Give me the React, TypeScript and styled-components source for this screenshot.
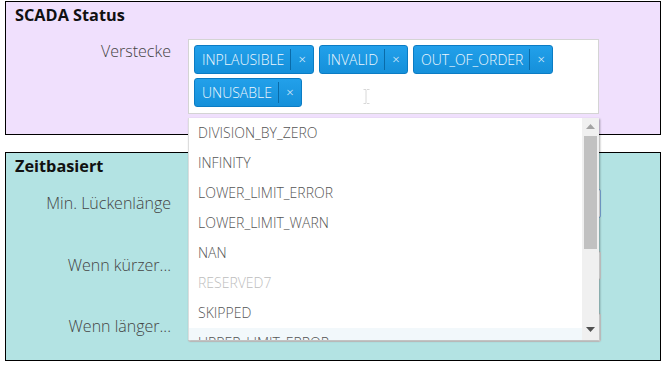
import React from 'react';
import styled, { createGlobalStyle } from 'styled-components';

const GlobalStyle = createGlobalStyle`
  html, body {
    margin: 0;
    padding: 0;
    background: #fff;
    font-family: 'Open Sans', 'Liberation Sans', sans-serif;
  }
`;

const Page = styled.div`
  padding: 1px 10px 0 5px;
  display: flex;
  flex-direction: column;
  gap: 17px;
  width: 656px;
`;

const Panel = styled.section<{ $bg: string; $height: number }>`
  position: relative;
  box-sizing: border-box;
  height: ${(p) => p.$height}px;
  background: ${(p) => p.$bg};
  border: 1px solid #000;
  padding: 2px 0 0 0;
`;

const Title = styled.h3`
  margin: 0 0 0 9px;
  font-size: 16.3px;
  font-weight: 700;
  line-height: 22px;
  color: #111;
`;

const FormGrid = styled.div<{ $top: number; $gap: number }>`
  display: grid;
  grid-template-columns: 165px 411px;
  column-gap: 17px;
  row-gap: ${(p) => p.$gap}px;
  margin-top: ${(p) => p.$top}px;
`;

const Label = styled.label<{ $pad: number }>`
  text-align: right;
  font-size: 16px;
  font-weight: 300;
  color: #444;
  padding-top: ${(p) => p.$pad}px;
  line-height: 20px;
`;

const Control = styled.div`
  position: relative;
`;

const TagBox = styled.div`
  box-sizing: border-box;
  width: 411px;
  height: 75px;
  background: #fff;
  border: 1px solid #d4d4d4;
  padding: 5px 0 0 5px;
  display: flex;
  flex-wrap: wrap;
  align-content: flex-start;
  gap: 4px 5px;
  position: relative;
`;

const Tag = styled.span`
  display: inline-flex;
  align-items: stretch;
  height: 29px;
  box-sizing: border-box;
  background: linear-gradient(#22a0ea, #1590da);
  border: 1px solid #0b7cc4;
  border-radius: 3px;
  color: #eef7fd;
  font-size: 14px;
  font-weight: 300;
  line-height: 27px;
`;

const TagText = styled.span`
  padding: 0 6px 0 7px;
`;

const TagClose = styled.span`
  width: 22px;
  border-left: 1px solid #0a6ba8;
  margin: 3px 0;
  line-height: 21px;
  text-align: center;
  font-size: 13px;
`;

const Cursor = styled.svg`
  position: absolute;
  left: 174px;
  top: 49px;
`;

const Dropdown = styled.div`
  position: absolute;
  z-index: 5;
  top: 79px;
  left: 0;
  width: 411px;
  height: 222px;
  box-sizing: border-box;
  background: #fff;
  border-left: 1px solid #ddd;
  box-shadow: 1px 1px 2px rgba(0, 0, 0, 0.35);
  display: flex;
  overflow: hidden;
`;

const OptionList = styled.ul`
  list-style: none;
  margin: 0;
  padding: 0;
  flex: 1;
  overflow: hidden;
`;

const Option = styled.li<{ $disabled?: boolean; $active?: boolean }>`
  height: 30px;
  line-height: 30px;
  padding-left: 9px;
  font-size: 14px;
  font-weight: 300;
  color: ${(p) => (p.$disabled ? '#bdbdbd' : '#555')};
  background: ${(p) => (p.$active ? '#f2f8fb' : 'transparent')};
`;

const ScrollTrack = styled.div`
  width: 17px;
  background: #f0f0f0;
  display: flex;
  flex-direction: column;
  align-items: center;
`;

const Arrow = styled.div<{ $down?: boolean }>`
  height: 17px;
  display: flex;
  align-items: center;
  justify-content: center;
  ${(p) => (p.$down ? 'margin-top: auto; margin-bottom: 2px;' : '')}
`;

const Thumb = styled.div`
  width: 13px;
  height: 113px;
  margin-top: 1px;
  background: #c1c1c1;
`;

const TextInput = styled.div<{ $focus?: boolean }>`
  box-sizing: border-box;
  width: 413px;
  height: 29px;
  background: #fff;
  border: 1px solid ${(p) => (p.$focus ? '#7aa7d8' : '#d0d0d0')};
  border-radius: 2px;
`;

const options = [
  { name: 'DIVISION_BY_ZERO' },
  { name: 'INFINITY' },
  { name: 'LOWER_LIMIT_ERROR' },
  { name: 'LOWER_LIMIT_WARN' },
  { name: 'NAN' },
  { name: 'RESERVED7', disabled: true },
  { name: 'SKIPPED' },
  { name: 'UPPER_LIMIT_ERROR', active: true },
];

const tags = ['INPLAUSIBLE', 'INVALID', 'OUT_OF_ORDER', 'UNUSABLE'];

const App = () => {
  return (
    <>
      <GlobalStyle />
      <Page>
        <Panel $bg='#f0e0fd' $height={134} style={{ zIndex: 2 }}>
          <Title>SCADA Status</Title>
          <FormGrid $top={13} $gap={0}>
            <Label $pad={2}>Verstecke</Label>
            <Control>
              <TagBox>
                {tags.map((t) => (
                  <Tag key={t}>
                    <TagText>{t}</TagText>
                    <TagClose>×</TagClose>
                  </Tag>
                ))}
                <Cursor width='7' height='15' viewBox='0 0 7 15'>
                  <path d='M0.5 0.5h2.5v14h-2.5M6.5 0.5h-2.5M6.5 14.5h-2.5' stroke='#d8d8d8' fill='none' strokeWidth='1' />
                </Cursor>
              </TagBox>
              <Dropdown>
                <OptionList>
                  {options.map((o) => (
                    <Option key={o.name} $disabled={o.disabled} $active={o.active}>
                      {o.name}
                    </Option>
                  ))}
                </OptionList>
                <ScrollTrack>
                  <Arrow>
                    <svg width='9' height='5' viewBox='0 0 9 5'>
                      <path d='M0 5L4.5 0L9 5Z' fill='#a3a3a3' />
                    </svg>
                  </Arrow>
                  <Thumb />
                  <Arrow $down>
                    <svg width='9' height='5' viewBox='0 0 9 5'>
                      <path d='M0 0L4.5 5L9 0Z' fill='#505050' />
                    </svg>
                  </Arrow>
                </ScrollTrack>
              </Dropdown>
            </Control>
          </FormGrid>
        </Panel>
        <Panel $bg='#b3e3e3' $height={209}>
          <Title>Zeitbasiert</Title>
          <FormGrid $top={12} $gap={33}>
            <Label $pad={4}>Min. Lückenlänge</Label>
            <TextInput $focus />
            <Label $pad={4}>Wenn kürzer...</Label>
            <TextInput />
            <Label $pad={3}>Wenn länger...</Label>
            <TextInput />
          </FormGrid>
        </Panel>
      </Page>
    </>
  );
};

export default App;
